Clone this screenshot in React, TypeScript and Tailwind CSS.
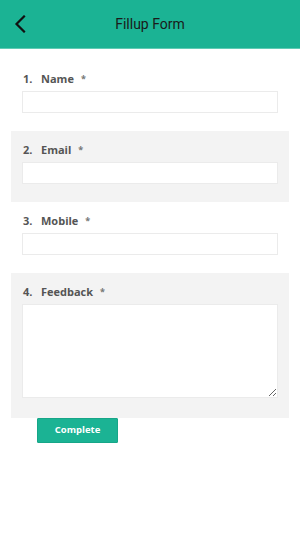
import React from 'react';

const fields = [
  { n: 1, label: 'Name', type: 'input', gray: false },
  { n: 2, label: 'Email', type: 'input', gray: true },
  { n: 3, label: 'Mobile', type: 'input', gray: false },
  { n: 4, label: 'Feedback', type: 'textarea', gray: true },
];

export default function App() {
  return (
    <div className="min-h-[534px] w-[300px] bg-white font-['Open_Sans',sans-serif]">
      {/* Header */}
      <header className="relative flex h-[49px] items-center justify-center border-b border-[#5fcbb4] bg-[#1bb394]">
        <button className="absolute left-[12px] top-[13px] flex h-[22px] w-[16px] items-center justify-center">
          <svg width="12" height="18" viewBox="0 0 12 18" fill="none">
            <path d="M10 1.5L2.5 9l7.5 7.5" stroke="#111" strokeWidth="2.2" strokeLinecap="square" />
          </svg>
        </button>
        <h1 className="font-['Roboto',sans-serif] text-[14px] font-normal text-[#1a1a1a]">Fillup Form</h1>
      </header>

      {/* Form */}
      <main className="px-[11px] pt-[11px]">
        {fields.map((f) => (
          <section
            key={f.n}
            className={`px-[11px] pt-[11px] ${f.gray ? 'bg-[#f3f3f3]' : 'bg-white'} ${
              f.type === 'textarea' ? 'pb-[20px]' : 'pb-[18px]'
            }`}
          >
            <label className="mb-[4px] flex h-[16px] items-center text-[11px] font-bold leading-[16px] text-[#555]">
              <span className="w-[19px] pl-[1px]">{f.n}.</span>
              <span>{f.label}</span>
              <span className="ml-[7px] text-[9px] text-[#777]">*</span>
            </label>
            {f.type === 'input' ? (
              <input className="block h-[22px] w-full border border-[#ebebeb] bg-white outline-none" />
            ) : (
              <textarea className="block h-[94px] w-full border border-[#ebebeb] bg-white outline-none" />
            )}
          </section>
        ))}
        <button className="ml-[26px] block h-[25px] w-[81px] rounded-[1px] border border-[#17a688] bg-[#1bb394] text-[9.5px] font-bold text-white">
          Complete
        </button>
      </main>
    </div>
  );
}
